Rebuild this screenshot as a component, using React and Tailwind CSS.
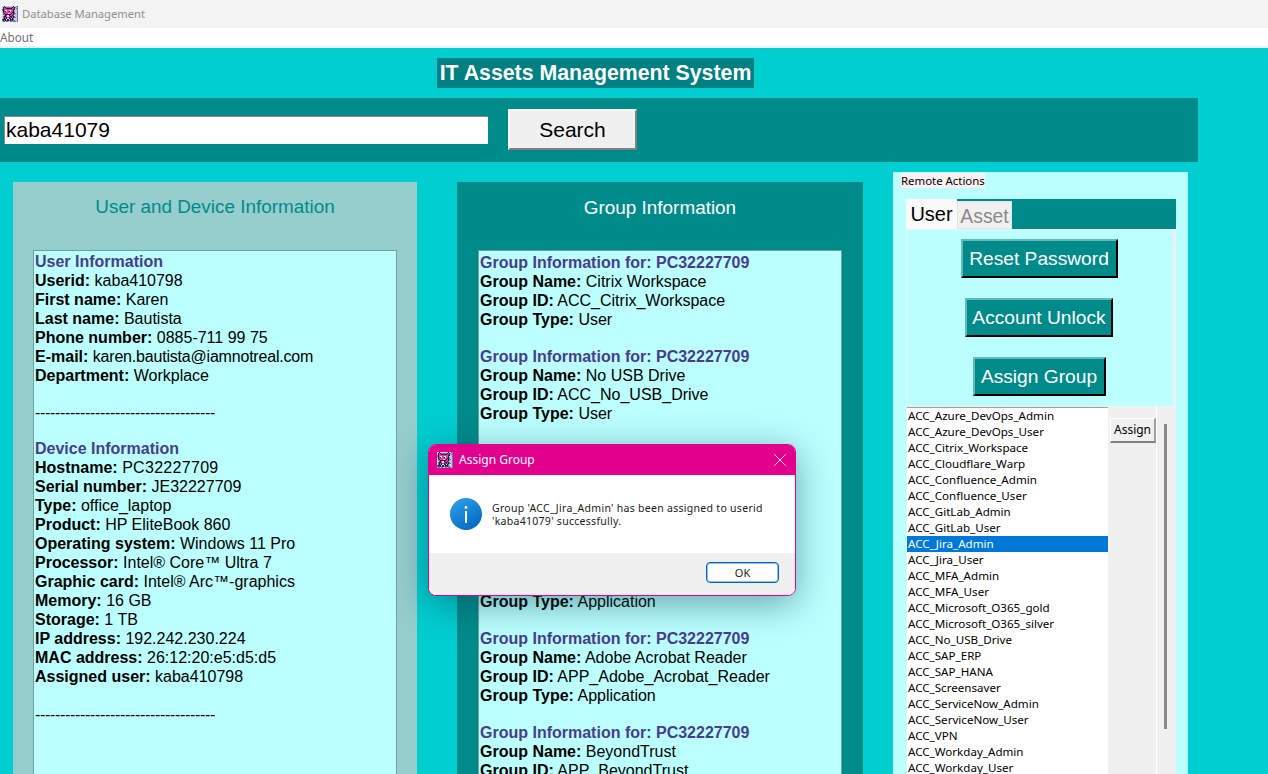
import React from 'react';
import { X } from 'lucide-react';

const userRows = [
    ['Userid:', 'kaba410798'],
    ['First name:', 'Karen'],
    ['Last name:', 'Bautista'],
    ['Phone number:', '0885-711 99 75'],
    ['E-mail:', 'karen.bautista@iamnotreal.com', 'tracking-[-0.2px]'],
    ['Department:', 'Workplace'],
];

const deviceRows = [
    ['Hostname:', 'PC32227709', 'tracking-[0.3px]'],
    ['Serial number:', 'JE32227709'],
    ['Type:', 'office_laptop'],
    ['Product:', 'HP EliteBook 860'],
    ['Operating system:', 'Windows 11 Pro'],
    ['Processor:', 'Intel® Core™ Ultra 7'],
    ['Graphic card:', 'Intel® Arc™-graphics'],
    ['Memory:', '16 GB'],
    ['Storage:', '1 TB'],
    ['IP address:', '192.242.230.224'],
    ['MAC address:', '26:12:20:e5:d5:d5'],
    ['Assigned user:', 'kaba410798'],
];

const groups = [
    ['Citrix Workspace', 'ACC_Citrix_Workspace', 'User'],
    ['No USB Drive', 'ACC_No_USB_Drive', 'User'],
    ['Microsoft Teams', 'APP_Microsoft_Teams', 'Application'],
    ['7-Zip', 'APP_7_Zip', 'Application'],
    ['Adobe Acrobat Reader', 'APP_Adobe_Acrobat_Reader', 'Application'],
    ['BeyondTrust', 'APP_BeyondTrust', 'Application'],
];

const accessGroups = [
    'ACC_Azure_DevOps_Admin', 'ACC_Azure_DevOps_User', 'ACC_Citrix_Workspace', 'ACC_Cloudflare_Warp',
    'ACC_Confluence_Admin', 'ACC_Confluence_User', 'ACC_GitLab_Admin', 'ACC_GitLab_User',
    'ACC_Jira_Admin', 'ACC_Jira_User', 'ACC_MFA_Admin', 'ACC_MFA_User',
    'ACC_Microsoft_O365_gold', 'ACC_Microsoft_O365_silver', 'ACC_No_USB_Drive', 'ACC_SAP_ERP',
    'ACC_SAP_HANA', 'ACC_Screensaver', 'ACC_ServiceNow_Admin', 'ACC_ServiceNow_User',
    'ACC_VPN', 'ACC_Workday_Admin', 'ACC_Workday_User',
];

// pixel art app logo
const logoPixels = [
    'ggnggggggggnggbb',
    'gnpnbbbbbbnpnbgb',
    'gnppnnnnnnppngbb',
    'bnpppppppppnnggb',
    'bnpwwppwwppnwggb',
    'gnpnwppnwppnbggb',
    'gnppppppppnnbwgb',
    'wbnpppwwpnpnbbgb',
    'gbbnnnnnnppnbggb',
    'gwbnpwwnppnbwggb',
    'gbnnpwwpnnpnbggb',
    'wbnpnppnpnpnbbgb',
    'gbnpnwwnnwnbgwgb',
    'bnnnwnnwnnnbgggb',
    'bnpnbnnbnpnbbggb',
    'gbbgbbggbbgbbbgb',
];

const logoColors = { b: '#6a78a8', n: '#1b1e48', p: '#f0349a', w: '#f5dbe8', g: '#c4cade' };

function Logo() {
    return (
        <svg width="16" height="16" viewBox="0 0 16 16" shapeRendering="crispEdges" className="shrink-0">
            {logoPixels.map((row, y) =>
                row.split('').map((c, x) => (
                    <rect key={x + '-' + y} x={x} y={y} width="1" height="1" fill={logoColors[c]} />
                ))
            )}
        </svg>
    );
}

function Row({ label, value, valueClass }) {
    return (
        <div className="whitespace-nowrap">
            <b className="font-bold">{label}</b> <span className={valueClass}>{value}</span>
        </div>
    );
}

function Heading({ children }) {
    return <div className="font-bold text-[#483D8B] whitespace-nowrap">{children}</div>;
}

function ActionButton({ children, width }) {
    return (
        <button className={`h-[39px] ${width} shrink-0 pt-[1px] bg-[#008B8B] text-white text-[19.2px] border-t-2 border-l-2 border-b-2 border-r-2 border-t-[#66B9B9] border-l-[#66B9B9] border-b-black border-r-black`}>
            {children}
        </button>
    );
}

export default function App() {
    return (
        <div className="relative w-[1268px] h-[774px] overflow-hidden bg-[#00CED1] font-['Liberation_Sans',sans-serif] text-black">
            {/* Title bar */}
            <div className="h-7 bg-[#F3F3F3] flex items-center pl-[2px] gap-1">
                <Logo />
                <span className="font-['Noto_Sans',sans-serif] text-[11.2px] text-[#8f8f8f]">Database Management</span>
            </div>
            {/* Menu */}
            <div className="h-[20px] bg-white border-b-2 border-[#F0F0F0] flex items-center pt-[1px] font-['Noto_Sans',sans-serif] text-[11.7px] text-[#6f6f6f]">
                About
            </div>

            {/* Title */}
            <div className="pt-[10px] pl-[437px]">
                <div className="w-[317px] h-[30px] bg-[#008080] text-white font-bold text-[21.3px] leading-[30px] text-center whitespace-nowrap">
                    IT Assets Management System
                </div>
            </div>

            {/* Search */}
            <div className="mt-[10px] w-[1198px] h-16 bg-[#008B8B] flex items-center pl-1">
                <div className="w-[484px] h-[28px] bg-white border-t border-l border-[#8a8a8a] text-[21px] leading-[25px] pl-[1px]">
                    kaba41079
                </div>
                <button className="ml-5 w-[129px] h-[41px] bg-[#F0F0F0] text-[21px] border-t-2 border-l-2 border-b-2 border-r-2 border-t-white border-l-white border-b-[#808080] border-r-[#808080] -mt-[1px]">
                    Search
                </button>
            </div>

            <div className="flex items-start pl-[13px]">
                {/* User and device */}
                <div className="mt-5 w-[404px] h-[700px] bg-[#96CDCD] px-5">
                    <div className="h-[68px] pt-3 text-center text-[18.9px] leading-[26px] text-[#008B8B]">User and Device Information</div>
                    <div className="h-[600px] bg-[#BBFFFF] border border-[#6f9f9f] pl-[1px] pt-[1px] text-[16px] leading-[19px]">
                        <Heading>User Information</Heading>
                        {userRows.map(([label, value, cls]) => <Row key={label} label={label} value={value} valueClass={cls} />)}
                        <div className="h-[18px]" />
                        <div className="tracking-[-0.33px]">------------------------------------</div>
                        <div className="h-[17px]" />
                        <Heading>Device Information</Heading>
                        {deviceRows.map(([label, value, cls]) => <Row key={label} label={label} value={value} valueClass={cls} />)}
                        <div className="h-[19px]" />
                        <div className="tracking-[-0.33px]">------------------------------------</div>
                    </div>
                </div>

                {/* Groups */}
                <div className="mt-5 ml-10 w-[406px] h-[700px] bg-[#008B8B] px-[21px]">
                    <div className="h-[68px] pt-[13px] text-center text-[18.9px] leading-[26px] text-white">Group Information</div>
                    <div className="h-[600px] bg-[#BBFFFF] border border-[#6f9f9f] pl-[1px] pt-[2px] text-[16px] leading-[19px]">
                        {groups.map(([name, id, type]) => (
                            <div key={id} className="mb-[18px]">
                                <Heading>Group Information for: PC32227709</Heading>
                                <Row label="Group Name:" value={name} />
                                <Row label="Group ID:" value={id} />
                                <Row label="Group Type:" value={type} />
                            </div>
                        ))}
                    </div>
                </div>

                {/* Remote actions */}
                <div className="mt-[10px] ml-[30px] w-[295px] h-[700px] bg-[#BBFFFF] pl-2">
                    <div className="pt-[1px] h-[27px]">
                        <span className="block w-[84px] h-[15px] bg-[#FBF1F3] font-['Noto_Sans',sans-serif] text-[11.4px] leading-[15px] whitespace-nowrap">Remote Actions</span>
                    </div>
                    <div className="ml-[5px] w-[270px]">
                        <div className="h-[30px] bg-[#008B8B] flex items-end">
                            <div className="w-[51px] h-[30px] bg-[#F9F9F9] text-[20px] leading-[30px] text-center">User</div>
                            <div className="w-[55px] h-[28px] bg-[#F0F0F0] border border-[#e3e3e3] text-[19.4px] leading-[29px] text-center text-[#8a8a8a]">Asset</div>
                        </div>
                        <div className="border-r-[3px] border-t border-[#F0F0F0] border-l border-l-[#e6f5f5]">
                            <div className="h-[176px] flex flex-col items-center gap-5 pt-[9px] pr-[2px]">
                                <ActionButton width="w-[157px]">Reset Password</ActionButton>
                                <ActionButton width="w-[148px]">Account Unlock</ActionButton>
                                <ActionButton width="w-[133px]">Assign Group</ActionButton>
                            </div>
                            <div className="h-[400px] bg-[#F0F0F0] flex items-start">
                                <div className="mt-[1px] w-[201px] shrink-0 bg-white border-t border-[#a0a0a0] font-['Noto_Sans',sans-serif] text-[11.6px] leading-4 whitespace-nowrap">
                                    {accessGroups.map((g) => (
                                        <div key={g} className={g === 'ACC_Jira_Admin' ? 'h-4 pl-[1px] bg-[#0078D7] text-white' : 'h-4 pl-[1px]'}>{g}</div>
                                    ))}
                                </div>
                                <button className="mt-[12px] ml-[2px] w-[46px] h-[25px] shrink-0 bg-[#F0F0F0] font-['Noto_Sans',sans-serif] text-[12px] border-t border-l border-b-2 border-r-2 border-t-white border-l-white border-b-[#808080] border-r-[#a0a0a0]">
                                    Assign
                                </button>
                                <div className="h-[400px] w-[8px] shrink-0 border-l border-white pl-[7px]">
                                    <div className="mt-[18px] w-[3px] h-[305px] bg-[#8a8a8a]" />
                                </div>
                            </div>
                        </div>
                    </div>
                </div>
            </div>

            {/* Message dialog */}
            <div className="absolute left-[428px] top-[444px] w-[368px] h-[152px] rounded-lg border border-[#E3008C] bg-white overflow-hidden shadow-[0_8px_36px_rgba(0,60,70,0.45)] flex flex-col font-['Noto_Sans',sans-serif]">
                <div className="h-[30px] bg-[#E3008C] flex items-center pl-2 pr-[4px] gap-[6px] text-white text-[12px]">
                    <Logo />
                    <span className="flex-1">Assign Group</span>
                    <X size={22} strokeWidth={0.9} />
                </div>
                <div className="flex-1 flex items-start pl-[21px] pt-[23px] gap-[10px]">
                    <svg width="32" height="32" viewBox="0 0 32 32" className="shrink-0">
                        <defs>
                            <linearGradient id="infoFill" x1="0.2" y1="0" x2="0.8" y2="1">
                                <stop offset="0" stopColor="#2C9FE6" />
                                <stop offset="1" stopColor="#0067C0" />
                            </linearGradient>
                        </defs>
                        <circle cx="16" cy="16" r="16" fill="url(#infoFill)" />
                        <circle cx="16" cy="9.5" r="1.4" fill="#fff" />
                        <rect x="15" y="13" width="2" height="12" fill="#fff" />
                    </svg>
                    <div className="pt-1 text-[10.5px] leading-[13px] tracking-[0.29px] text-[#1a1a1a] whitespace-nowrap">
                        <div>Group 'ACC_Jira_Admin' has been assigned to userid</div>
                        <div>'kaba41079' successfully.</div>
                    </div>
                </div>
                <div className="h-[42px] bg-[#F0F0F0] flex items-center justify-end pr-4 pb-[3px]">
                    <button className="w-[73px] h-[21px] bg-[#FDFDFD] border border-[#0067C0] shadow-[inset_0_0_0_1px_#8fc1ec] rounded-[4px] text-[11px] leading-none text-[#1a1a1a]">OK</button>
                </div>
            </div>
        </div>
    );
}
